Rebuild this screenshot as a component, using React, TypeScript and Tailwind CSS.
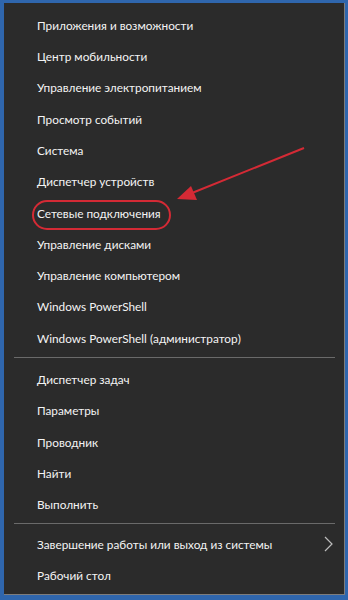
import { FC } from "react";

const group1 = [
  "Приложения и возможности",
  "Центр мобильности",
  "Управление электропитанием",
  "Просмотр событий",
  "Система",
  "Диспетчер устройств",
  "Сетевые подключения",
  "Управление дисками",
  "Управление компьютером",
  "Windows PowerShell",
  "Windows PowerShell (администратор)",
];
const group2 = ["Диспетчер задач", "Параметры", "Проводник", "Найти", "Выполнить"];

const Item: FC<{ text: string; arrow?: boolean }> = ({ text, arrow }) => (
  <div className="h-[31.3px] flex items-center justify-between pl-[33px] pr-[11px]">
    <span className="text-[11.8px] text-[#f4f4f4] leading-none">{text}</span>
    {arrow && (
      <svg width="9" height="16" viewBox="0 0 9 16" fill="none" stroke="#bdbdbd" strokeWidth="1.2">
        <path d="M1 1l7 7-7 7" />
      </svg>
    )}
  </div>
);

export default function App() {
  return (
    <div className="w-[348px] h-[600px] bg-[#2f66ad] pt-[3px] pl-[4px] pr-[3px] pb-[5px] overflow-hidden" style={{ fontFamily: 'Lato, "Open Sans", sans-serif' }}>
      <div className="relative h-full bg-[#2b2b2b] border-r border-b border-[#7d7d7d] pt-[7px]">
        {group1.map((t) => (
          <Item key={t} text={t} />
        ))}
        <div className="ml-[10px] mr-[9px] mt-[3px] mb-[6px] h-px bg-[#6a6a6a]" />
        {group2.map((t) => (
          <Item key={t} text={t} />
        ))}
        <div className="ml-[10px] mr-[9px] mt-[2px] mb-[5px] h-px bg-[#6a6a6a]" />
        <Item text="Завершение работы или выход из системы" arrow />
        <Item text="Рабочий стол" />

        <div className="absolute left-[28px] top-[197px] w-[139px] h-[30px] rounded-[15px] border-2 border-[#d42a35]" />
        <svg className="absolute left-0 top-0" width="341" height="300" viewBox="0 0 341 300">
          <line x1="300" y1="145" x2="188" y2="190" stroke="#d42a35" strokeWidth="2" />
          <polygon points="173,196 187,183 193,197" fill="#d42a35" />
        </svg>
      </div>
    </div>
  );
}
